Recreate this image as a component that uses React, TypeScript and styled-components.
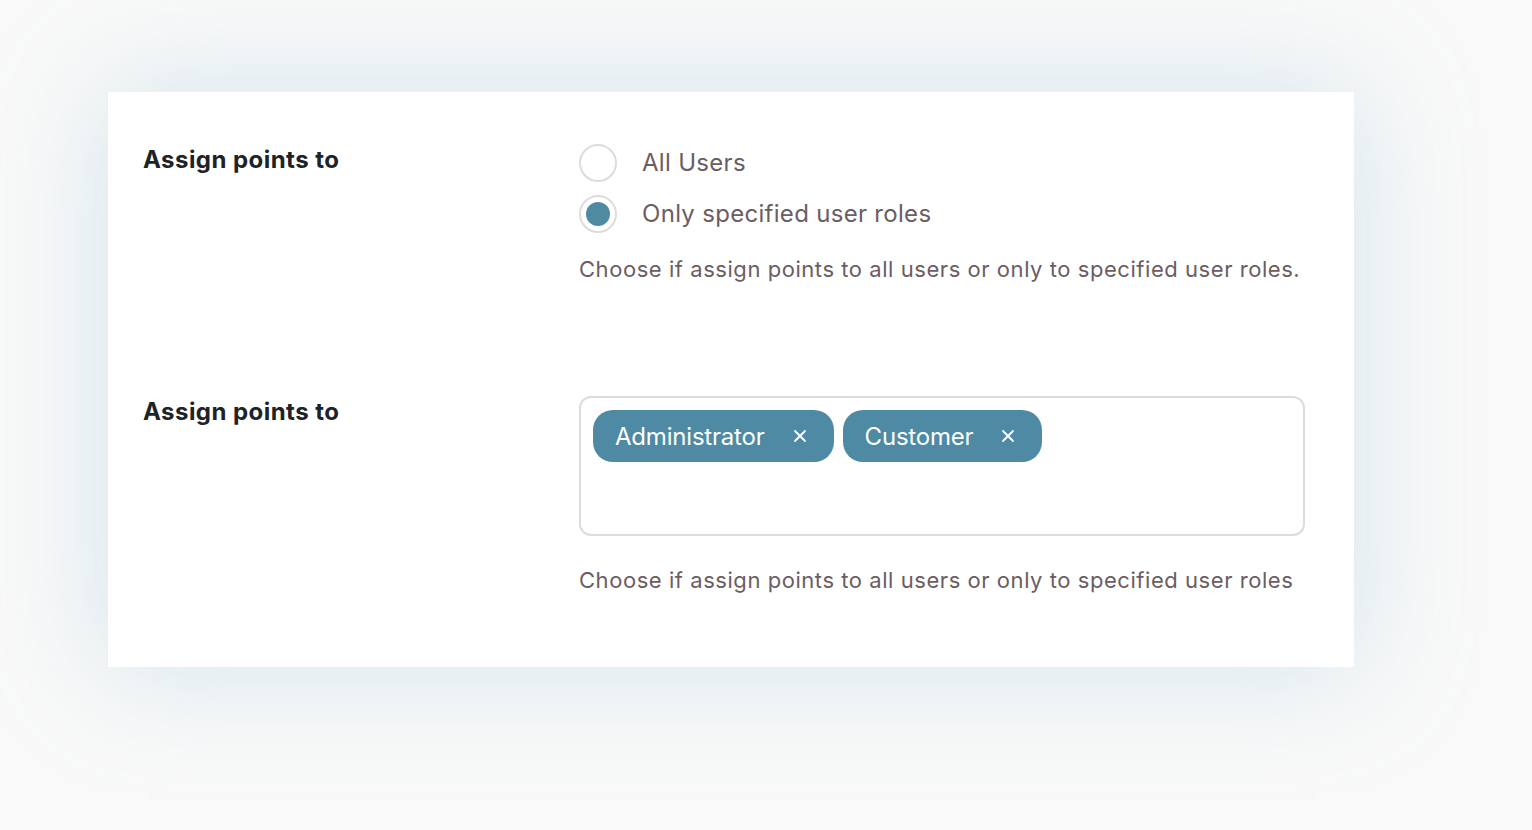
import React, { useState } from 'react';
import styled, { createGlobalStyle } from 'styled-components';

const GlobalStyle = createGlobalStyle`
  html, body {
    margin: 0;
    padding: 0;
    background: #f9f9f9;
    font-family: Inter, "Noto Sans", sans-serif;
  }
`;

const Page = styled.div`
  min-height: 830px;
  padding: 92px 0 0 108px;
  box-sizing: border-box;
`;

const Card = styled.div`
  width: 1246px;
  box-sizing: border-box;
  background: #ffffff;
  padding: 52px 49px 72px 35px;
  box-shadow: 0 0 110px rgba(140, 190, 212, 0.34);
`;

const Row = styled.div<{ $gap?: number }>`
  display: grid;
  grid-template-columns: 436px 1fr;
  align-items: start;
  margin-top: ${(p) => p.$gap || 0}px;
`;

const Label = styled.div`
  font-size: 24px;
  line-height: 32px;
  font-weight: 700;
  letter-spacing: 0.45px;
  color: #1d2327;
`;

const RadioList = styled.div`
  display: flex;
  flex-direction: column;
  gap: 13px;
`;

const RadioItem = styled.label`
  display: flex;
  align-items: center;
  gap: 25px;
  cursor: pointer;
  font-size: 24px;
  line-height: 38px;
  letter-spacing: 0.3px;
  color: #6b5d62;
`;

const RadioCircle = styled.span<{ $checked: boolean }>`
  width: 38px;
  height: 38px;
  box-sizing: border-box;
  border-radius: 50%;
  border: 2px solid #dcdcde;
  display: flex;
  align-items: center;
  justify-content: center;

  &::after {
    content: '';
    width: 24px;
    height: 24px;
    border-radius: 50%;
    background: #4f8aa3;
    display: ${(p) => (p.$checked ? 'block' : 'none')};
  }
`;

const Help = styled.p<{ $top: number }>`
  margin: ${(p) => p.$top}px 0 0;
  font-size: 22px;
  line-height: 30px;
  letter-spacing: 0.55px;
  color: #6b5d62;
`;

const TagBox = styled.div`
  height: 140px;
  box-sizing: border-box;
  border: 2px solid #dcdcde;
  border-radius: 12px;
  padding: 12px;
  display: flex;
  align-items: flex-start;
  flex-wrap: wrap;
  gap: 9px;
`;

const Tag = styled.span`
  display: inline-flex;
  align-items: center;
  height: 52px;
  padding: 0 27px 0 22px;
  border-radius: 20px;
  background: #4e8aa3;
  color: #ffffff;
  font-size: 24px;
  letter-spacing: -0.2px;
  gap: 28px;
`;

const Remove = styled.button`
  border: 0;
  background: none;
  padding: 0;
  display: flex;
  color: #ffffff;
  cursor: pointer;
`;

const roles = ['Administrator', 'Customer'];

export default function App() {
  const [mode, setMode] = useState('roles');
  const [tags, setTags] = useState(roles);

  return (
    <Page>
      <GlobalStyle />
      <Card>
        <Row>
          <Label>Assign points to</Label>
          <div>
            <RadioList>
              <RadioItem onClick={() => setMode('all')}>
                <RadioCircle $checked={mode === 'all'} />
                All Users
              </RadioItem>
              <RadioItem onClick={() => setMode('roles')}>
                <RadioCircle $checked={mode === 'roles'} />
                Only specified user roles
              </RadioItem>
            </RadioList>
            <Help $top={21}>Choose if assign points to all users or only to specified user roles.</Help>
          </div>
        </Row>
        <Row $gap={112}>
          <Label>Assign points to</Label>
          <div>
            <TagBox>
              {tags.map((t) => (
                <Tag key={t}>
                  {t}
                  <Remove onClick={() => setTags(tags.filter((x) => x !== t))}>
                    <svg width="14" height="14" viewBox="0 0 14 14" fill="none" stroke="currentColor" strokeWidth="1.8" strokeLinecap="round">
                      <path d="M2 2l10 10M12 2L2 12" />
                    </svg>
                  </Remove>
                </Tag>
              ))}
            </TagBox>
            <Help $top={29}>Choose if assign points to all users or only to specified user roles</Help>
          </div>
        </Row>
      </Card>
    </Page>
  );
}
